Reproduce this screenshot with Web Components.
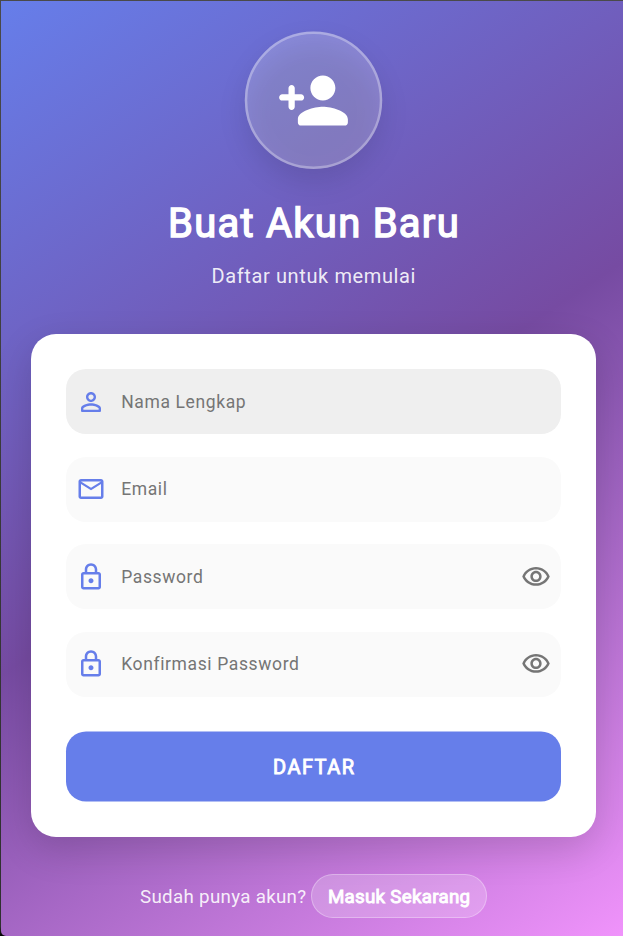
<!DOCTYPE html>
<html lang="id">
<head>
<meta charset="utf-8">
<title>Buat Akun Baru</title>
<style>
html,body{margin:0;height:100%}
body{font-family:Roboto,sans-serif;background:#444;overflow:hidden}
</style>
</head>
<body>
<register-page>
  <hero-header heading="Buat Akun Baru" sub="Daftar untuk memulai"></hero-header>
  <form-card>
    <text-field icon="person" active>Nama Lengkap</text-field>
    <text-field icon="mail">Email</text-field>
    <text-field icon="lock" toggle>Password</text-field>
    <text-field icon="lock" toggle>Konfirmasi Password</text-field>
    <submit-button slot="action">DAFTAR</submit-button>
  </form-card>
  <sign-in-row><span slot="q">Sudah punya akun?</span>Masuk Sekarang</sign-in-row>
</register-page>
<script>
const ICONS = {
  add: 'M15 12c2.21 0 4-1.79 4-4s-1.79-4-4-4-4 1.79-4 4 1.79 4 4 4zm-9-2V8c0-.55-.45-1-1-1s-1 .45-1 1v2H2c-.55 0-1 .45-1 1s.45 1 1 1h2v2c0 .55.45 1 1 1s1-.45 1-1v-2h2c.55 0 1-.45 1-1s-.45-1-1-1H6zm9 4c-2.67 0-8 1.34-8 4v1c0 .55.45 1 1 1h14c.55 0 1-.45 1-1v-1c0-2.66-5.33-4-8-4z',
  person: 'M12 5.9c1.16 0 2.1.94 2.1 2.1s-.94 2.1-2.1 2.1S9.9 9.16 9.9 8s.94-2.1 2.1-2.1m0 9c2.97 0 6.1 1.46 6.1 2.1v1.1H5.9V17c0-.64 3.13-2.1 6.1-2.1M12 4C9.79 4 8 5.79 8 8s1.79 4 4 4 4-1.79 4-4-1.79-4-4-4zm0 9c-2.67 0-8 1.34-8 4v2c0 .55.45 1 1 1h14c.55 0 1-.45 1-1v-2c0-2.66-5.33-4-8-4z',
  mail: 'M22 6c0-1.1-.9-2-2-2H4c-1.1 0-2 .9-2 2v12c0 1.1.9 2 2 2h16c1.1 0 2-.9 2-2V6zm-2 0l-8 5-8-5h16zm0 12H4V8l8 5 8-5v10z',
  lock: 'M18 8h-1V6c0-2.76-2.24-5-5-5S7 3.24 7 6v2H6c-1.1 0-2 .9-2 2v10c0 1.1.9 2 2 2h12c1.1 0 2-.9 2-2V10c0-1.1-.9-2-2-2zM9 6c0-1.66 1.34-3 3-3s3 1.34 3 3v2H9V6zm9 14H6V10h12v10zm-6-3c1.1 0 2-.9 2-2s-.9-2-2-2-2 .9-2 2 .9 2 2 2z',
  eye: 'M12 6c3.79 0 7.17 2.13 8.82 5.5C19.17 14.87 15.79 17 12 17s-7.17-2.13-8.82-5.5C4.83 8.13 8.21 6 12 6m0-2C7 4 2.73 7.11 1 11.5 2.73 15.89 7 19 12 19s9.27-3.11 11-7.5C21.27 7.11 17 4 12 4zm0 5c1.38 0 2.5 1.12 2.5 2.5S13.38 14 12 14s-2.5-1.12-2.5-2.5S10.62 9 12 9m0-2c-2.48 0-4.5 2.02-4.5 4.5S9.52 16 12 16s4.5-2.02 4.5-4.5S14.48 7 12 7z'
};
const define = (name, render) => customElements.define(name, class extends HTMLElement {
  constructor() { super(); this.attachShadow({ mode: 'open' }); }
  connectedCallback() { this.shadowRoot.innerHTML = render(this); }
});

define('md-icon', el => `<style>
:host{display:block;flex:none;width:var(--size,30px);height:var(--size,30px)}
svg{display:block;width:100%;height:100%;fill:currentColor}
</style><svg viewBox="0 0 24 24"><path d="${ICONS[el.getAttribute('name')]}"/></svg>`);

define('register-page', () => `<style>
:host{display:block;box-sizing:border-box;height:936px;padding:1px 0 0 1px;background:linear-gradient(#4a4a4a,#383838 60%,#303030 99%,#000)}
main{box-sizing:border-box;height:935px;padding:30.5px 27px 0 30px;display:flex;flex-direction:column;border-bottom-left-radius:5px;
background:linear-gradient(146.37deg,#667eea 0%,#764ba2 50%,#f093fb 100%)}
</style><main><slot></slot></main>`);

define('hero-header', el => `<style>
:host{display:flex;flex-direction:column;align-items:center;height:302.5px;color:#fff}
.badge{position:relative;width:137.5px;height:137.5px;display:flex;align-items:center;justify-content:center}
/* the soft shadow also darkens the translucent disc itself */
.shade{position:absolute;inset:12.5px 0 -12.5px;border-radius:50%;background:rgba(0,0,0,.1);filter:blur(13px)}
.disc{position:absolute;left:0;top:0;width:100%;height:100%;overflow:visible;transform:translate(-.25px,-.5px)}
md-icon{position:relative;--size:75px}
h1{margin:31px 0 0 1px;font-size:40px;line-height:47px;font-weight:400;letter-spacing:1.25px;-webkit-text-stroke:1.4px #fff;white-space:nowrap}
p{margin:17px 0 0 .5px;font-size:20px;line-height:24px;letter-spacing:.625px;color:rgba(255,255,255,.9)}
</style><div class="badge"><div class="shade"></div>
<svg class="disc" viewBox="0 0 137.5 137.5"><circle cx="68.75" cy="68.75" r="68.75" fill="#fff" fill-opacity=".2"/><circle cx="68.75" cy="68.75" r="67.5" fill="none" stroke="#fff" stroke-opacity=".3" stroke-width="2.5"/></svg>
<md-icon name="add"></md-icon></div>
<h1>${el.getAttribute('heading')}</h1><p>${el.getAttribute('sub')}</p>`);

define('form-card', () => `<style>
:host{box-sizing:border-box;display:flex;flex-direction:column;gap:22.5px;height:502.5px;padding:35px;border-radius:25px;background:#fff;
box-shadow:0 12.5px 37.5px rgba(0,0,0,.15)}
.action{margin-top:12.5px}
</style><slot></slot><div class="action"><slot name="action"></slot></div>`);

define('text-field', el => `<style>
:host{box-sizing:border-box;display:flex;align-items:center;height:65px;padding:0 10px;border-radius:20px;background:${el.hasAttribute('active') ? '#efefef' : '#fafafa'};color:#667eea}
label{flex:1;margin-left:15.2px;font-size:17.5px;line-height:22px;letter-spacing:.625px;color:#757575}
.eye{color:#757575}
</style><md-icon name="${el.getAttribute('icon')}"></md-icon><label><slot></slot></label>${el.hasAttribute('toggle') ? '<md-icon class="eye" name="eye"></md-icon>' : ''}`);

define('submit-button', () => `<style>
:host{display:flex;align-items:center;justify-content:center;height:70px;border-radius:20px;background:#667eea;color:#fff;transform:translateY(-.5px);
font-size:20px;letter-spacing:1.45px;-webkit-text-stroke:.9px #fff}
.t{padding-left:1.5px}
</style><span class="t"><slot></slot></span>`);

define('sign-in-row', () => `<style>
:host{display:flex;align-items:center;justify-content:center;margin-top:37.5px;height:44px;font-size:18.75px;color:#fff;white-space:nowrap}
span{line-height:22px}
.q{color:rgba(255,255,255,.9);letter-spacing:.3px;margin-right:5px;padding-top:2px}
.pill{box-sizing:border-box;display:flex;align-items:center;justify-content:center;width:175.5px;height:44px;padding-top:2px;border:1.25px solid rgba(255,255,255,.3);border-radius:25px;background:rgba(255,255,255,.2);letter-spacing:.28px;-webkit-text-stroke:.9px #fff}
</style><span class="q"><slot name="q"></slot></span><span class="pill"><slot></slot></span>`);
</script>
</body>
</html>
